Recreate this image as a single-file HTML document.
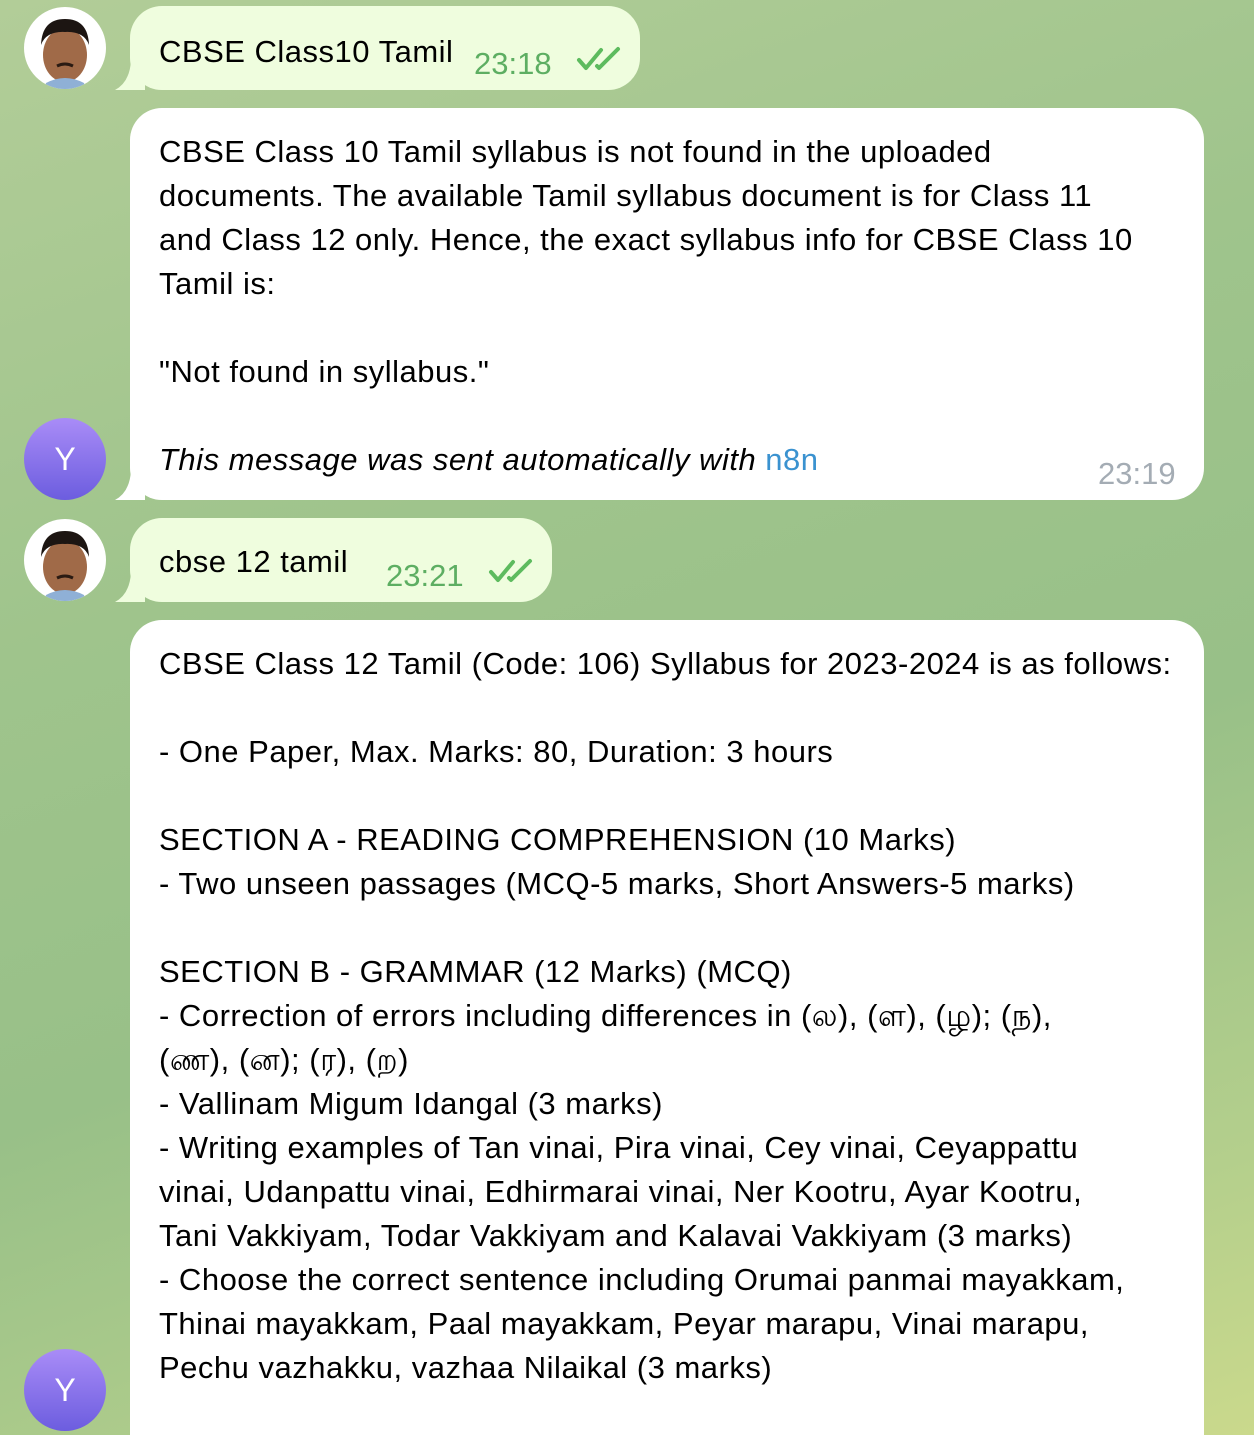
<!DOCTYPE html>
<html style="overflow:hidden;height:1435px"><head><meta charset="utf-8"><style>
*{margin:0;padding:0;box-sizing:border-box}
body{width:1254px;height:1435px;overflow:hidden;position:relative;
background:linear-gradient(160deg,#b2cd98 0%,#9fc48c 35%,#98c088 60%,#b4cf8c 85%,#cad98c 100%);
font-family:"Liberation Sans","Noto Sans CJK SC",sans-serif;color:#000}
.b{position:absolute;border-radius:32px;font-size:31px;letter-spacing:0.5px;line-height:44px;white-space:nowrap}
.g{background:#effdde}
.w{background:#fff}
.tail{position:absolute;width:30px;height:30px}
.av{position:absolute;width:82px;height:82px;border-radius:50%;overflow:hidden}
.y{background:linear-gradient(#a98cf7,#6c5ddf);color:#fff;font-size:32px;text-align:center;line-height:82px}
.ph{background:#fff}
.t{position:absolute;font-size:31px;letter-spacing:0}
.tg{color:#5dae62}
</style></head><body>

<div class="av ph" style="left:24px;top:7px"><svg width="82" height="82"><ellipse cx="41" cy="48" rx="22" ry="27" fill="#a06a48"/><path d="M17 38 Q18 12 41 12 Q64 12 65 38 Q60 24 41 25 Q22 24 17 38Z" fill="#1c1512"/><path d="M22 76 Q41 66 60 76 L62 82 L20 82Z" fill="#8fb0d6"/><path d="M33 59 Q41 55 49 59" stroke="#2a1a12" stroke-width="3" fill="none"/></svg></div>
<div class="av y" style="left:24px;top:418px">Y</div>
<div class="av ph" style="left:24px;top:519px"><svg width="82" height="82"><ellipse cx="41" cy="48" rx="22" ry="27" fill="#a06a48"/><path d="M17 38 Q18 12 41 12 Q64 12 65 38 Q60 24 41 25 Q22 24 17 38Z" fill="#1c1512"/><path d="M22 76 Q41 66 60 76 L62 82 L20 82Z" fill="#8fb0d6"/><path d="M33 59 Q41 55 49 59" stroke="#2a1a12" stroke-width="3" fill="none"/></svg></div>
<div class="av y" style="left:24px;top:1349px">Y</div>

<svg class="tail" style="left:115px;top:60px" viewBox="0 0 30 30"><path d="M30 0 V30 H0 Q15 22 16 0Z" fill="#effdde"/></svg>
<div class="b g" style="left:130px;top:6px;width:510px;height:84px">
<span style="position:absolute;left:29px;top:24px">CBSE Class10 Tamil</span>
<span class="t tg" style="left:344px;top:36px">23:18</span>
<svg style="position:absolute;left:446px;top:40px" width="48" height="30"><path d="M3 14 L10 22 L25 4 M21 20 L23 22 L42 3" stroke="#5dbb5e" stroke-width="4" fill="none" stroke-linecap="round" stroke-linejoin="round"/></svg>
</div>

<svg class="tail" style="left:115px;top:470px" viewBox="0 0 30 30"><path d="M30 0 V30 H0 Q15 22 16 0Z" fill="#fff"/></svg>
<div class="b w" style="left:130px;top:108px;width:1074px;height:392px">
<div style="position:absolute;left:29px;top:22px">CBSE Class 10 Tamil syllabus is not found in the uploaded<br>documents. The available Tamil syllabus document is for Class 11<br>and Class 12 only. Hence, the exact syllabus info for CBSE Class 10<br>Tamil is:<br><br>"Not found in syllabus."<br><br><i>This message was sent automatically with </i><span style="color:#3a92d0">n8n</span></div>
<span class="t" style="left:968px;top:344px;color:#a4acb4">23:19</span>
</div>

<svg class="tail" style="left:115px;top:572px" viewBox="0 0 30 30"><path d="M30 0 V30 H0 Q15 22 16 0Z" fill="#effdde"/></svg>
<div class="b g" style="left:130px;top:518px;width:422px;height:84px">
<span style="position:absolute;left:29px;top:22px">cbse 12 tamil</span>
<span class="t tg" style="left:256px;top:36px">23:21</span>
<svg style="position:absolute;left:358px;top:40px" width="48" height="30"><path d="M3 14 L10 22 L25 4 M21 20 L23 22 L42 3" stroke="#5dbb5e" stroke-width="4" fill="none" stroke-linecap="round" stroke-linejoin="round"/></svg>
</div>

<div class="b w" style="left:130px;top:620px;width:1074px;height:815px;border-radius:32px 32px 0 0">
<div style="position:absolute;left:29px;top:22px">CBSE Class 12 Tamil (Code: 106) Syllabus for 2023-2024 is as follows:<br><br>- One Paper, Max. Marks: 80, Duration: 3 hours<br><br>SECTION A - READING COMPREHENSION (10 Marks)<br>- Two unseen passages (MCQ-5 marks, Short Answers-5 marks)<br><br>SECTION B - GRAMMAR (12 Marks) (MCQ)<br>- Correction of errors including differences in (ல), (ள), (ழ); (ந),<br>(ண), (ன); (ர), (ற)<br>- Vallinam Migum Idangal (3 marks)<br>- Writing examples of Tan vinai, Pira vinai, Cey vinai, Ceyappattu<br>vinai, Udanpattu vinai, Edhirmarai vinai, Ner Kootru, Ayar Kootru,<br>Tani Vakkiyam, Todar Vakkiyam and Kalavai Vakkiyam (3 marks)<br>- Choose the correct sentence including Orumai panmai mayakkam,<br>Thinai mayakkam, Paal mayakkam, Peyar marapu, Vinai marapu,<br>Pechu vazhakku, vazhaa Nilaikal (3 marks)</div>
</div>
</body></html>
